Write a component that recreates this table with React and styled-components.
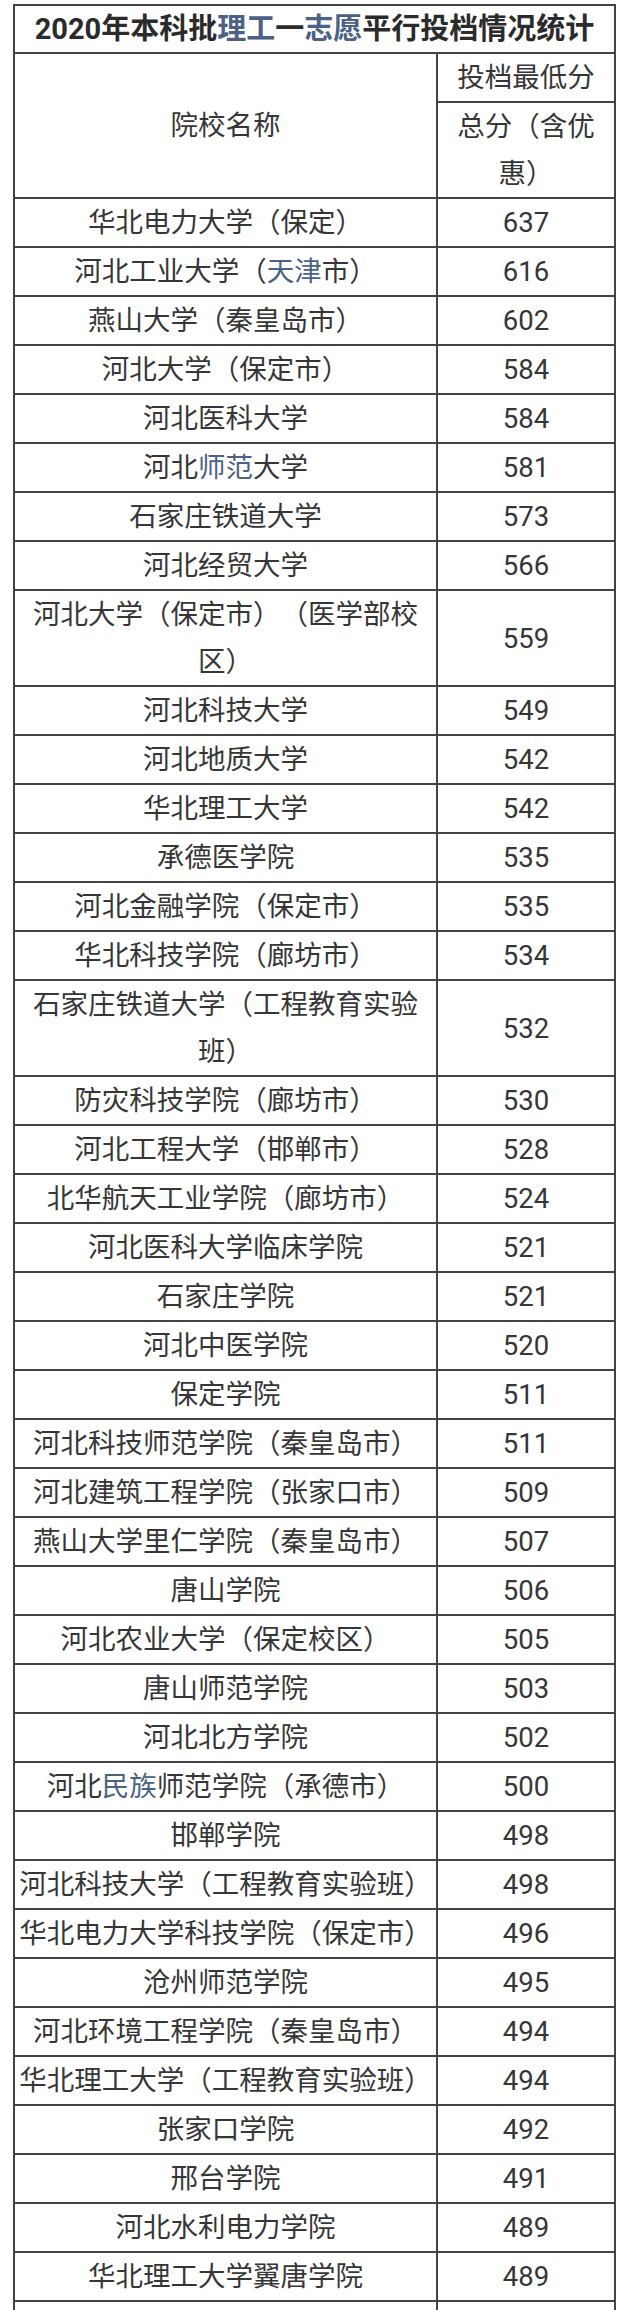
import React from 'react';
import styled, { createGlobalStyle } from 'styled-components';

const GlobalStyle = createGlobalStyle`
  html, body {
    margin: 0;
    padding: 0;
    background: #fff;
  }
  body {
    font-family: Roboto, "Noto Sans CJK SC", sans-serif;
    color: #363636;
    text-spacing-trim: space-all;
  }
`;

// 院校 + 最低分；数组里的对象 { hl } 表示蓝色高亮的字
const schools = [
  ['华北电力大学（保定）', 637],
  [['河北工业大学（', { hl: '天津' }, '市）'], 616],
  ['燕山大学（秦皇岛市）', 602],
  ['河北大学（保定市）', 584],
  ['河北医科大学', 584],
  [['河北', { hl: '师范' }, '大学'], 581],
  ['石家庄铁道大学', 573],
  ['河北经贸大学', 566],
  ['河北大学（保定市）（医学部校区）', 559],
  ['河北科技大学', 549],
  ['河北地质大学', 542],
  ['华北理工大学', 542],
  ['承德医学院', 535],
  ['河北金融学院（保定市）', 535],
  ['华北科技学院（廊坊市）', 534],
  ['石家庄铁道大学（工程教育实验班）', 532],
  ['防灾科技学院（廊坊市）', 530],
  ['河北工程大学（邯郸市）', 528],
  ['北华航天工业学院（廊坊市）', 524],
  ['河北医科大学临床学院', 521],
  ['石家庄学院', 521],
  ['河北中医学院', 520],
  ['保定学院', 511],
  ['河北科技师范学院（秦皇岛市）', 511],
  ['河北建筑工程学院（张家口市）', 509],
  ['燕山大学里仁学院（秦皇岛市）', 507],
  ['唐山学院', 506],
  ['河北农业大学（保定校区）', 505],
  ['唐山师范学院', 503],
  ['河北北方学院', 502],
  [['河北', { hl: '民族' }, '师范学院（承德市）'], 500],
  ['邯郸学院', 498],
  ['河北科技大学（工程教育实验班）', 498],
  ['华北电力大学科技学院（保定市）', 496],
  ['沧州师范学院', 495],
  ['河北环境工程学院（秦皇岛市）', 494],
  ['华北理工大学（工程教育实验班）', 494],
  ['张家口学院', 492],
  ['邢台学院', 491],
  ['河北水利电力学院', 489],
  ['华北理工大学翼唐学院', 489],
];

function renderName(name) {
  if (typeof name === 'string') return name;
  return name.map((part, i) =>
    typeof part === 'string' ? part : <Highlight key={i}>{part.hl}</Highlight>
  );
}

export default function App() {
  return (
    <>
      <GlobalStyle />
      <Page>
        <Table>
          <colgroup>
            <col style={{ width: 423 }} />
            <col style={{ width: 178 }} />
          </colgroup>
          <tbody>
            <tr>
              <TitleCell colSpan={2}>
                2020年本科批<Highlight>理工</Highlight>一<Highlight>志愿</Highlight>平行投档情况统计
              </TitleCell>
            </tr>
            <tr>
              <Cell rowSpan={2}>院校名称</Cell>
              <Cell>投档最低分</Cell>
            </tr>
            <tr>
              <Cell $pad={10}>总分（含优惠）</Cell>
            </tr>
            {schools.map(([name, score], i) => (
              <tr key={i}>
                <Cell>{renderName(name)}</Cell>
                <Cell>{score}</Cell>
              </tr>
            ))}
            <tr>
              <Cell>&nbsp;</Cell>
              <Cell>&nbsp;</Cell>
            </tr>
          </tbody>
        </Table>
      </Page>
    </>
  );
}

const Page = styled.div`
  padding: 4px 0 0 13px;
  width: 640px;
  height: 2310px;
  box-sizing: border-box;
  overflow: hidden;
`;

const Table = styled.table`
  width: 601px;
  table-layout: fixed;
  border-collapse: collapse;
`;

const Cell = styled.td`
  border: 2px solid #444;
  padding: 0 ${({ $pad }) => $pad || 0}px;
  text-align: center;
  vertical-align: middle;
  font-size: 27.5px;
  line-height: 47px;
  color: #363636;
  word-break: break-all;
`;

const TitleCell = styled(Cell)`
  font-size: 29px;
  font-weight: 700;
  line-height: 46px;
  color: #2b2b2b;
`;

const Highlight = styled.span`
  color: #4b6285;
`;
